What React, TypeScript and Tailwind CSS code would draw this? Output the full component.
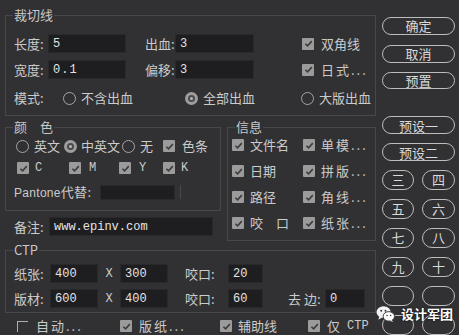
import type { ReactNode } from 'react'

const mono = "font-['Liberation_Mono',monospace]"

function Check() {
  return (
    <span className="flex h-[12px] w-[12px] shrink-0 items-center justify-center rounded-[1px] bg-[#9b9b9b]">
      <svg viewBox="0 0 12 12" className="h-[11px] w-[11px]">
        <path d="M2.6 6.2 L5 8.6 L9.6 3.4" fill="none" stroke="#3c3c3e" strokeWidth="1.7" />
      </svg>
    </span>
  )
}

function Radio({ on = false }: { on?: boolean }) {
  if (on) {
    return (
      <span className="flex h-[13px] w-[13px] shrink-0 items-center justify-center rounded-full bg-[#9d9d9d]">
        <span className="flex h-[7px] w-[7px] items-center justify-center rounded-full bg-[#4a4a4c]">
          <span className="h-[3px] w-[3px] rounded-full bg-[#b8b8b8]" />
        </span>
      </span>
    )
  }
  return <span className="h-[13px] w-[13px] shrink-0 rounded-full border border-[#a5a5a5]" />
}

function Box({ value, className }: { value?: string; className: string }) {
  return (
    <span
      className={`flex h-[19px] shrink-0 items-center border border-[#29292b] bg-[#1e1e20] pl-[4px] text-[12px] text-[#e4e4e4] ${mono} ${className}`}
    >
      {value}
    </span>
  )
}

function Pill({ children, className = 'w-[73px]' }: { children: ReactNode; className?: string }) {
  return (
    <div
      className={`flex h-[20px] items-center justify-center rounded-full border border-[#bdbdbd] text-[13px] leading-none text-[#dadada] ${className}`}
    >
      {children}
    </div>
  )
}

function Group({ title, className, children }: { title: string; className: string; children: ReactNode }) {
  return (
    <fieldset className={`border border-[#48484a] ${className}`}>
      <legend className="ml-[7px] px-[1px] text-[13px] leading-[18px] text-[#c8c8c8]">{title}</legend>
      {children}
    </fieldset>
  )
}

export default function App() {
  return (
    <div className="relative flex h-[335px] w-[459px] overflow-hidden bg-[#313133] font-['Noto_Sans_CJK_SC',sans-serif] text-[13px] text-[#cbcbcb]">
      {/* left column */}
      <div className="flex w-[377px] shrink-0 flex-col pl-[5px]">
        <Group title="裁切线" className="mt-[6px] h-[110px] w-[371px]">
          <div className="mt-[10px] flex h-[19px] items-center pl-[8px]">
            <span className="w-[34px]">长度:</span>
            <Box value="5" className="w-[78px]" />
            <span className="ml-[19px] w-[30px]">出血:</span>
            <Box value="3" className="w-[79px]" />
            <span className="ml-[48px] flex items-center gap-[7px]">
              <Check />
              双角线
            </span>
          </div>
          <div className="mt-[7px] flex h-[19px] items-center pl-[8px]">
            <span className="w-[34px]">宽度:</span>
            <Box value="0.1" className="w-[78px] tracking-[1px]" />
            <span className="ml-[19px] w-[30px]">偏移:</span>
            <Box value="3" className="w-[79px]" />
            <span className="ml-[48px] flex items-center gap-[7px]">
              <Check />
              <span className="tracking-[2px]">日式...</span>
            </span>
          </div>
          <div className="mt-[10px] flex h-[18px] items-center pl-[8px]">
            <span className="w-[49px]">模式:</span>
            <Radio />
            <span className="ml-[5px] w-[104px]">不含出血</span>
            <Radio on />
            <span className="ml-[5px] w-[98px]">全部出血</span>
            <Radio />
            <span className="ml-[5px]">大版出血</span>
          </div>
        </Group>

        <div className="mt-[2px] flex">
          <div className="flex w-[216px] flex-col">
            <Group title="颜　色" className="h-[93px] w-[216px]">
              <div className="mt-[1px] flex h-[18px] items-center pl-[10px]">
                <Radio />
                <span className="ml-[5px] w-[30px]">英文</span>
                <Radio on />
                <span className="ml-[4px] w-[41px]">中英文</span>
                <Radio />
                <span className="ml-[5px] w-[23px]">无</span>
                <Check />
                <span className="ml-[7px]">色条</span>
              </div>
              <div className={`mt-[4px] flex h-[18px] items-center pl-[11px] text-[12px] ${mono}`}>
                <span className="flex w-[52px] items-center gap-[6px]"><Check />C</span>
                <span className="flex w-[50px] items-center gap-[8px]"><Check />M</span>
                <span className="flex w-[44px] items-center gap-[8px]"><Check />Y</span>
                <span className="flex items-center gap-[6px]"><Check />K</span>
              </div>
              <div className="mt-[7px] flex h-[16px] items-center pl-[8px]">
                <span className="w-[86px] font-['Liberation_Sans',sans-serif] text-[12px] tracking-[0.3px]">
                  Pantone<span className="font-['Noto_Sans_CJK_SC',sans-serif] text-[13px]">代替:</span>
                </span>
                <span className="h-[15px] w-[75px] border border-[#29292b] bg-[#1e1e20]" />
                <span className="ml-[5px] h-[14px] w-px bg-[#48484a]" />
              </div>
            </Group>
            <div className="mt-[6px] flex h-[19px] items-center pl-[9px]">
              <span className="w-[35px]">备注:</span>
              <Box value="www.epinv.com" className="w-[164px]" />
            </div>
          </div>

          <Group title="信息" className="ml-[6px] h-[123px] w-[149px]">
            <div className="-mt-[4px] flex flex-col pl-[4px]">
              {[
                ['文件名', '单模...'],
                ['日期', '拼版...'],
                ['路径', '角线...'],
                ['咬　口', '纸张...'],
              ].map(([a, b]) => (
                <div key={a} className="flex h-[26px] items-center">
                  <span className="flex w-[71px] items-center gap-[6px]">
                    <Check />
                    {a}
                  </span>
                  <span className="flex items-center gap-[6px]">
                    <Check />
                    <span className="tracking-[2px]">{b}</span>
                  </span>
                </div>
              ))}
            </div>
          </Group>
        </div>

        <Group title="CTP" className="h-[72px] w-[371px]">
          <div className="mt-[5px] flex h-[19px] items-center pl-[8px]">
            <span className="w-[36px]">纸张:</span>
            <Box value="400" className="w-[48px]" />
            <span className={`w-[22px] text-center text-[12px] ${mono}`}>X</span>
            <Box value="300" className="w-[48px]" />
            <span className="ml-[17px] w-[43px]">咬口:</span>
            <Box value="20" className="w-[35px]" />
          </div>
          <div className="mt-[6px] flex h-[19px] items-center pl-[8px]">
            <span className="w-[36px]">版材:</span>
            <Box value="600" className="w-[48px]" />
            <span className={`w-[22px] text-center text-[12px] ${mono}`}>X</span>
            <Box value="400" className="w-[48px]" />
            <span className="ml-[17px] w-[43px]">咬口:</span>
            <Box value="60" className="w-[35px]" />
            <span className="ml-[25px] w-[37px]">去 边:</span>
            <Box value="0" className="w-[40px]" />
          </div>
        </Group>

        <div className="mt-[4px] flex h-[18px] items-center pl-[12px]">
          <span className="flex w-[103px] items-center gap-[8px]">
            <span className="h-[11px] w-[11px] border-l border-t border-[#b0b0b0]" />
            <span className="tracking-[2px]">自动...</span>
          </span>
          <span className="flex w-[100px] items-center gap-[7px]">
            <Check />
            <span className="tracking-[2px]">版纸...</span>
          </span>
          <span className="flex w-[88px] items-center gap-[6px]">
            <Check />
            辅助线
          </span>
          <span className="flex items-center gap-[7px]">
            <Check />
            仅 <span className={`text-[12px] ${mono}`}>CTP</span>
          </span>
        </div>
      </div>

      {/* right column */}
      <div className="flex flex-col pl-[5px] pt-[17px]">
        <Pill>确定</Pill>
        <Pill className="mt-[10px] w-[73px]">取消</Pill>
        <Pill className="mt-[9px] w-[73px]">预置</Pill>
        <Pill className="mt-[27px] w-[73px]">预设一</Pill>
        <Pill className="mt-[9px] w-[73px]">预设二</Pill>
        {[
          ['三', '四'],
          ['五', '六'],
          ['七', '八'],
          ['九', '十'],
          ['', ''],
          ['', ''],
        ].map(([a, b], i) => (
          <div key={i} className="mt-[9px] flex gap-[8px]">
            <Pill className="w-[32px]">{a}</Pill>
            <Pill className="w-[33px]">{b}</Pill>
          </div>
        ))}
      </div>

      {/* watermark */}
      <div className="absolute left-[376px] top-[304px] flex items-center gap-[6px] text-[13px] font-bold text-white">
        <svg viewBox="0 0 20 18" className="h-[18px] w-[19px]">
          <ellipse cx="8" cy="7" rx="7.5" ry="6.2" fill="#f2f2f2" />
          <path d="M3.5 11.5 L2.5 15 L6.5 12.6 Z" fill="#f2f2f2" />
          <ellipse cx="13.5" cy="11.5" rx="6" ry="5" fill="#ffffff" stroke="#313133" strokeWidth="1" />
          <path d="M16.5 15.2 L18 17.5 L14.5 16 Z" fill="#ffffff" />
          <circle cx="5.5" cy="5.5" r="1" fill="#313133" />
          <circle cx="10" cy="5.5" r="1" fill="#313133" />
          <circle cx="11.6" cy="10.5" r="0.8" fill="#313133" />
          <circle cx="15.4" cy="10.5" r="0.8" fill="#313133" />
        </svg>
        <span className="[text-shadow:0_0_2px_#000]">设计军团</span>
      </div>
    </div>
  )
}
